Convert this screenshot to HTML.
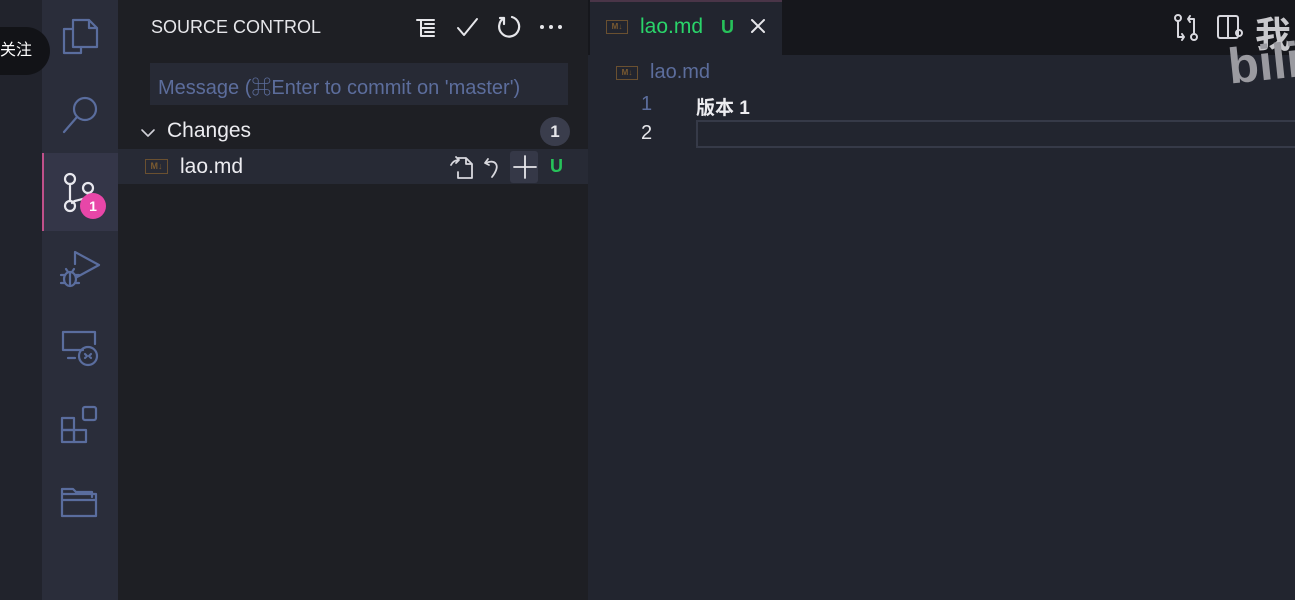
<!DOCTYPE html>
<html><head><meta charset="utf-8"><style>
*{margin:0;padding:0;box-sizing:border-box}
body{width:1295px;height:600px;overflow:hidden;background:#22252f;font-family:"Liberation Sans","Noto Sans CJK SC",sans-serif;position:relative}
.abs{position:absolute}
svg{position:absolute;fill:none;stroke-linecap:round;stroke-linejoin:round}
</style></head><body>
<div class="abs" style="left:0;top:0;width:42px;height:600px;background:#21232c"></div>
<div class="abs" style="left:42px;top:0;width:76px;height:600px;background:#2a2d3a"></div>
<div class="abs" style="left:0;top:27px;width:50px;height:48px;background:#121317;border-radius:0 24px 24px 0;color:#fff;font-size:16px;line-height:48px">关注</div>
<div class="abs" style="left:42px;top:153px;width:76px;height:78px;background:#343648"></div>
<div class="abs" style="left:42px;top:153px;width:2px;height:78px;background:#c0508a"></div>
<svg style="left:58px;top:15px" width="44" height="44" stroke="#5a6d9e" stroke-width="2.2"><path d="M6 14h8M6 14v24h17v-6M15 5h16l8 8v19H15z M31 5v8h8"/></svg>
<svg style="left:58px;top:92px" width="44" height="44" stroke="#5a6d9e" stroke-width="2.2"><circle cx="27" cy="17" r="11"/><path d="M19 25L6 40"/></svg>
<svg style="left:58px;top:170px" width="44" height="44" stroke="#e8e8ee" stroke-width="2.2"><circle cx="12" cy="9" r="5"/><circle cx="12" cy="36" r="5"/><circle cx="30" cy="18" r="5"/><path d="M12 14v17M30 23c0 8-14 6-16 10"/></svg>
<div class="abs" style="left:80px;top:193px;width:26px;height:26px;border-radius:50%;background:#e846a8;color:#fff;font-size:14px;font-weight:bold;text-align:center;line-height:26px">1</div>
<svg style="left:58px;top:248px" width="44" height="44" stroke="#5a6d9e" stroke-width="2.2"><path d="M17 16V4l24 13-22 12"/><ellipse cx="12" cy="31" rx="6" ry="7"/><path d="M3 27h4M3 35h4M17 27h4M17 35h4M12 24v14M8 21l2 3M16 21l-2 3"/></svg>
<svg style="left:58px;top:328px" width="44" height="44" stroke="#5a6d9e" stroke-width="2.2"><path d="M25 22H5V4h32v12M10 30h7"/><circle cx="30" cy="28" r="9"/><path d="M27 26l2 2-2 2M33 26l-2 2 2 2"/></svg>
<svg style="left:58px;top:404px" width="44" height="44" stroke="#5a6d9e" stroke-width="2.2"><rect x="4" y="14" width="12" height="12"/><rect x="4" y="26" width="12" height="12"/><rect x="16" y="26" width="12" height="12"/><rect x="25" y="3" width="13" height="13" rx="2"/></svg>
<svg style="left:58px;top:482px" width="44" height="44" stroke="#5a6d9e" stroke-width="2.2"><path d="M4 12V7h11l3 3h16v5M4 12h34v22H4zM4 18h34"/></svg>
<div class="abs" style="left:118px;top:0;width:470px;height:600px;background:#1e1f24"></div>
<div class="abs" style="left:151px;top:17px;color:#e6e6ea;font-size:18px">SOURCE CONTROL</div>
<svg style="left:413px;top:15px" width="26" height="26" stroke="#e6e6ea" stroke-width="2"><path d="M4 5h17M8 5v16h13M8 13h13M12 9h9M12 17h9"/></svg>
<svg style="left:455px;top:15px" width="26" height="26" stroke="#e6e6ea" stroke-width="2"><path d="M3 13l6 7L22 4"/></svg>
<svg style="left:497px;top:14px" width="26" height="26" stroke="#e6e6ea" stroke-width="2.2"><path d="M7 4a10 10 0 1 0 8 -1M7 4v6M7 4h-4"/></svg>
<svg style="left:538px;top:16px" width="26" height="22" fill="#e6e6ea" stroke="none"><circle cx="4" cy="11" r="2" fill="#e6e6ea"/><circle cx="13" cy="11" r="2" fill="#e6e6ea"/><circle cx="22" cy="11" r="2" fill="#e6e6ea"/></svg>
<div class="abs" style="left:150px;top:63px;width:418px;height:42px;background:#272a35"></div>
<div class="abs" style="left:158px;top:71px;color:#5c6d9c;font-size:20px">Message (⌘Enter to commit on 'master')</div>
<svg style="left:138px;top:123px" width="20" height="20" stroke="#d0d0d8" stroke-width="1.6"><path d="M4 7l6 6 6-6"/></svg>
<div class="abs" style="left:167px;top:119px;color:#ececf0;font-size:21px">Changes</div>
<div class="abs" style="left:540px;top:117px;width:30px;height:29px;border-radius:15px;background:#3a3d4c;color:#e6e6ea;font-size:17px;font-weight:bold;text-align:center;line-height:29px">1</div>
<div class="abs" style="left:118px;top:149px;width:470px;height:35px;background:#272a35"></div>
<div class="abs" style="left:145px;top:159px;width:23px;height:15px;border:1px solid #6a5030;color:#7a5a30;font-size:9px;font-weight:bold;line-height:13px;text-align:center">M↓</div>
<div class="abs" style="left:180px;top:155px;color:#ececf0;font-size:21px">lao.md</div>
<svg style="left:448px;top:153px" width="28" height="28" stroke="#d8d8de" stroke-width="1.8"><path d="M10 5h8l6 6v14H10v-6M18 5v6h6M3 12c2-4 5-5 8-5M8 4l3 3-3 3"/></svg>
<svg style="left:482px;top:153px" width="24" height="28" stroke="#d8d8de" stroke-width="1.8"><path d="M6 6l-3 4 4 2M4 10c8-4 16 1 6 14"/></svg>
<div class="abs" style="left:510px;top:151px;width:28px;height:32px;background:#353847;border-radius:3px"></div>
<svg style="left:511px;top:153px" width="28" height="28" stroke="#e6e6ea" stroke-width="1.8"><path d="M14 3v22M3 14h22"/></svg>
<div class="abs" style="left:550px;top:156px;color:#27c25a;font-size:18px;font-weight:bold">U</div>
<div class="abs" style="left:588px;top:0;width:707px;height:55px;background:#16171c"></div>
<div class="abs" style="left:590px;top:0;width:192px;height:55px;background:#22252f"></div>
<div class="abs" style="left:590px;top:0;width:192px;height:2px;background:#4a3548"></div>
<div class="abs" style="left:606px;top:20px;width:22px;height:14px;border:1px solid #6a5030;color:#7a5a30;font-size:8px;font-weight:bold;line-height:12px;text-align:center">M↓</div>
<div class="abs" style="left:640px;top:15px;color:#2ad46a;font-size:21px">lao.md</div>
<div class="abs" style="left:721px;top:17px;color:#27c25a;font-size:18px;font-weight:bold">U</div>
<svg style="left:748px;top:16px" width="20" height="20" stroke="#e6e6ea" stroke-width="2"><path d="M4 4l12 12M16 4L4 16"/></svg>
<svg style="left:1172px;top:13px" width="28" height="30" stroke="#d8d8de" stroke-width="2"><circle cx="6" cy="5" r="3"/><circle cx="22" cy="24" r="3"/><path d="M6 8v16h6M22 21V6h-6M10 21l2 3-2 3M18 3l-2 3 2 3"/></svg>
<svg style="left:1215px;top:13px" width="28" height="30" stroke="#d8d8de" stroke-width="2"><rect x="3" y="3" width="20" height="22" rx="2"/><path d="M13 3v22"/><circle cx="24" cy="20" r="3"/></svg>
<div class="abs" style="left:1255px;top:6px;color:#c8c8cc;font-size:36px;font-weight:bold">我</div>
<div class="abs" style="left:1228px;top:34px;color:#9a9aa0;font-size:50px;font-weight:bold;transform:rotate(-6deg)">bili</div>
<div class="abs" style="left:616px;top:66px;width:22px;height:14px;border:1px solid #6a5030;color:#7a5a30;font-size:8px;font-weight:bold;line-height:12px;text-align:center">M↓</div>
<div class="abs" style="left:650px;top:61px;color:#5c6d9c;font-size:20px">lao.md</div>
<div class="abs" style="left:641px;top:93px;color:#5c6d9c;font-size:20px">1</div>
<div class="abs" style="left:641px;top:122px;color:#e6e6ea;font-size:20px">2</div>
<div class="abs" style="left:696px;top:93px;color:#ececf0;font-size:19px;font-weight:bold">版本 1</div>
<div class="abs" style="left:696px;top:120px;width:600px;height:28px;border:2px solid #363a48;border-right:none"></div>
</body></html>
